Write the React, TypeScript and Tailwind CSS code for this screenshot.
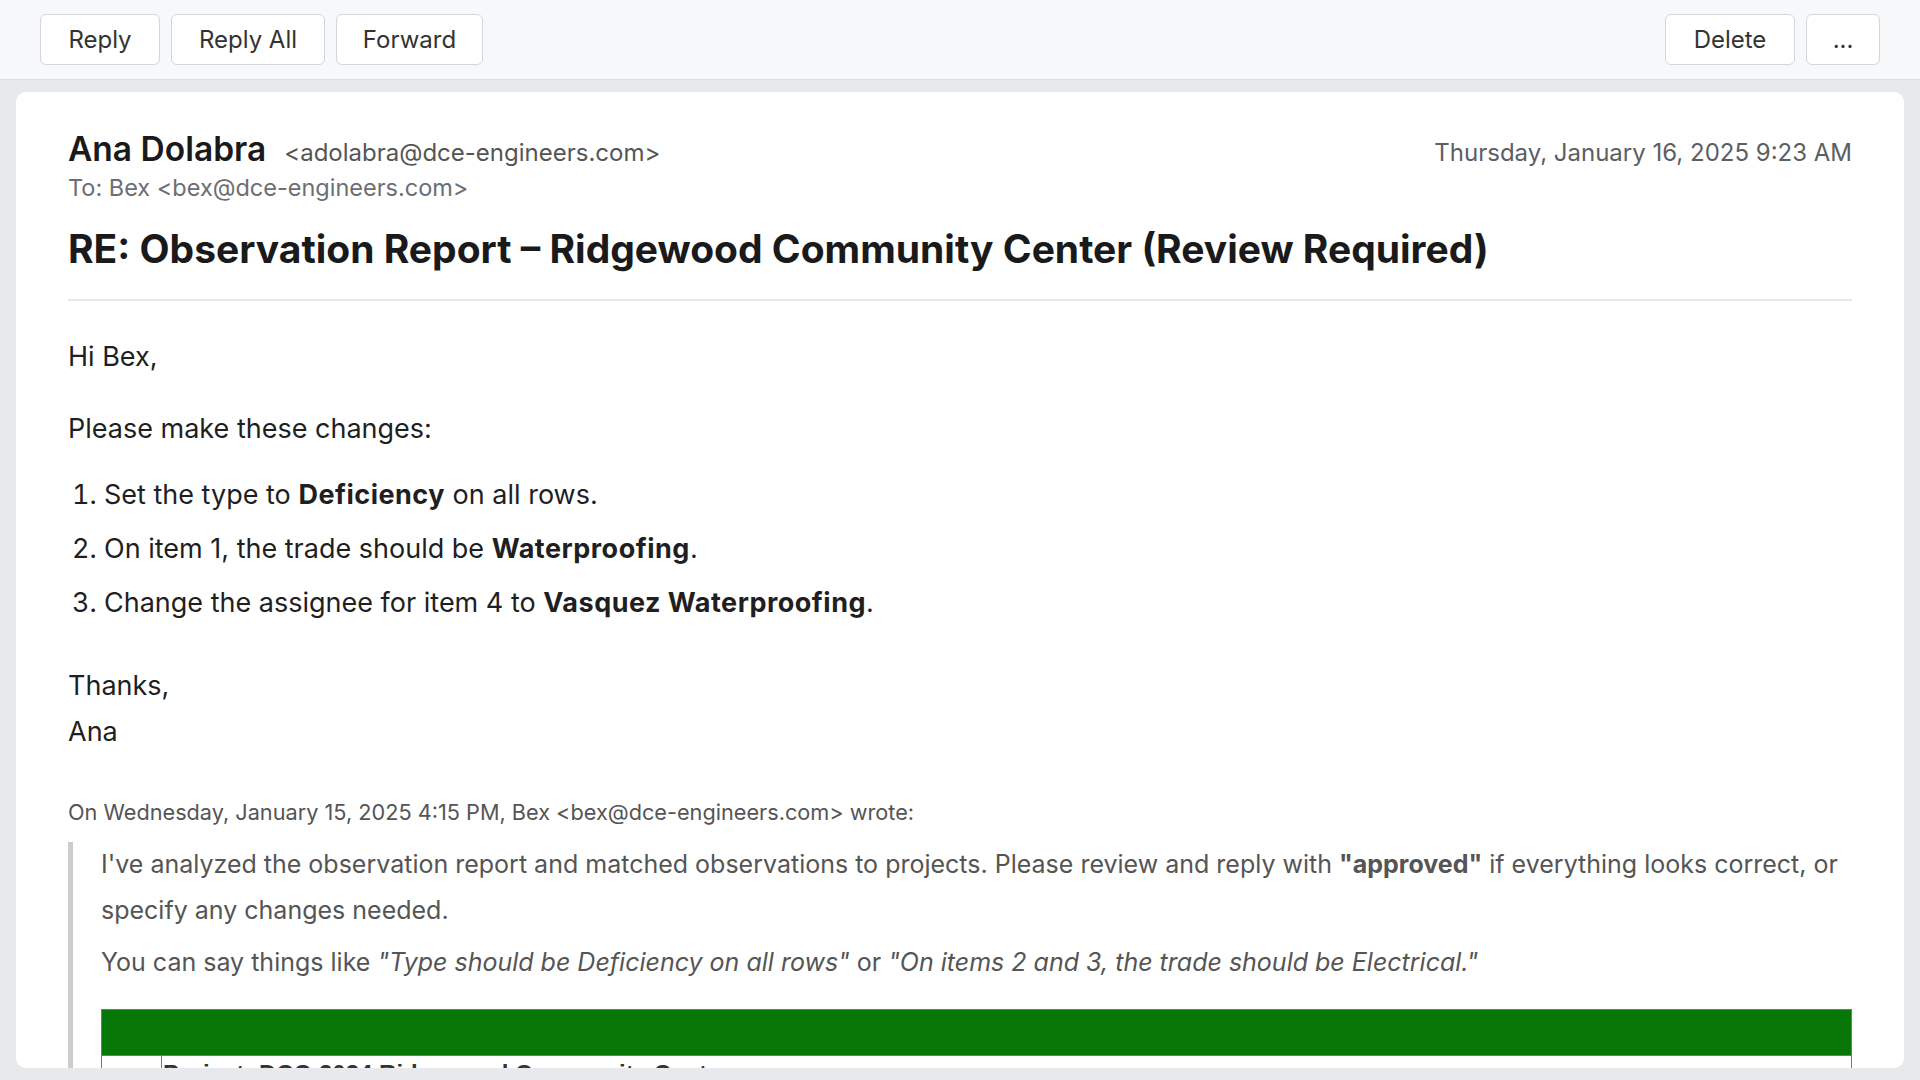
export default function App() {
  return (
    <div className="h-screen flex flex-col bg-[#e8e9ed] font-['Inter',sans-serif] text-[#1f1f1f]">
      {/* Toolbar */}
      <div className="h-[80px] shrink-0 bg-[#f7f8fa] border-b border-[#dcdde2] px-[40px] flex items-center justify-between">
        <div className="flex gap-[11px]">
          <button className="w-[120px] h-[51px] bg-white border border-[#d4d6db] rounded-[6px] text-[24px] text-[#333]">
            Reply
          </button>
          <button className="w-[154px] h-[51px] bg-white border border-[#d4d6db] rounded-[6px] text-[24px] text-[#333]">
            Reply All
          </button>
          <button className="w-[147px] h-[51px] bg-white border border-[#d4d6db] rounded-[6px] text-[24px] text-[#333]">
            Forward
          </button>
        </div>
        <div className="flex gap-[11px]">
          <button className="w-[130px] h-[51px] bg-white border border-[#d4d6db] rounded-[6px] text-[24px] text-[#333]">
            Delete
          </button>
          <button className="w-[74px] h-[51px] bg-white border border-[#d4d6db] rounded-[6px] text-[24px] text-[#333]">
            ...
          </button>
        </div>
      </div>

      {/* Message */}
      <div className="flex-1 min-h-0 px-4 py-3">
        <div className="h-full bg-white rounded-[10px] overflow-hidden px-[52px] pt-[39px]">
          {/* Header */}
          <div className="flex items-baseline justify-between">
            <div className="flex items-baseline gap-[18px]">
              <span className="text-[33.5px] leading-[36px] font-semibold text-[#1a1a1a]">Ana Dolabra</span>
              <span className="text-[24px] text-[#555]">&lt;adolabra@dce-engineers.com&gt;</span>
            </div>
            <span className="text-[24px] text-[#5b5e63]">Thursday, January 16, 2025 9:23 AM</span>
          </div>
          <div className="mt-[2px] text-[23.5px] leading-[30px] text-[#6b6e73]">
            To: Bex &lt;bex@dce-engineers.com&gt;
          </div>
          <h1 className="mt-[24px] pb-[28px] border-b-2 border-[#e6e7ea] text-[39px] leading-[44px] font-bold text-[#1a1a1a]">
            RE: Observation Report – Ridgewood Community Center (Review Required)
          </h1>

          {/* Body */}
          <div className="pt-[33px] text-[27px] leading-[46px] text-[#1f1f1f]">
            <p>Hi Bex,</p>
            <p className="mt-[26px]">Please make these changes:</p>
            <ol className="mt-[20px] list-decimal pl-[36px] space-y-[8px]">
              <li>
                Set the type to <strong className="font-bold tracking-[0.5px]">Deficiency</strong> on all rows.
              </li>
              <li>
                On item 1, the trade should be <strong className="font-bold tracking-[0.5px]">Waterproofing</strong>.
              </li>
              <li>
                Change the assignee for item 4 to{" "}
                <strong className="font-bold tracking-[0.5px]">Vasquez Waterproofing</strong>.
              </li>
            </ol>
            <p className="mt-[37px]">
              Thanks,
              <br />
              Ana
            </p>
          </div>

          {/* Quoted reply */}
          <div className="mt-[42px] text-[21.7px] leading-[30px] text-[#555]">
            On Wednesday, January 15, 2025 4:15 PM, Bex &lt;bex@dce-engineers.com&gt; wrote:
          </div>
          <div className="mt-[15px] border-l-[5px] border-[#cccccc] pl-[28px] text-[25px] leading-[45.5px] text-[#555]">
            <p>
              I&apos;ve analyzed the observation report and matched observations to projects. Please review and reply with{" "}
              <strong className="font-bold">&quot;approved&quot;</strong> if everything looks correct, or specify any changes needed.
            </p>
            <p className="mt-[7px]">
              You can say things like <em>&quot;Type should be Deficiency on all rows&quot;</em> or{" "}
              <em>&quot;On items 2 and 3, the trade should be Electrical.&quot;</em>
            </p>
            <table className="mt-[23px] w-full border-collapse border-[1.5px] border-[#777]">
              <thead>
                <tr>
                  <th colSpan={2} className="h-[46px] bg-[#077807] border-[1.5px] border-[#777]"></th>
                </tr>
              </thead>
              <tbody>
                <tr>
                  <td className="w-[60px] border-[1.5px] border-[#777]"></td>
                  <td className="border-[1.5px] border-[#777] pt-[6px] pl-[1px] text-[24px] leading-[24px] font-bold text-[#333] font-['Liberation_Sans',sans-serif]">
                    Project: DCC-2024 Ridgewood Community Center
                  </td>
                </tr>
              </tbody>
            </table>
          </div>
        </div>
      </div>
    </div>
  );
}
